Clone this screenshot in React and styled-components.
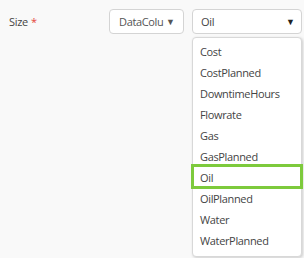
import React from "react";
import styled, { createGlobalStyle } from "styled-components";

const Global = createGlobalStyle`
  html, body { margin: 0; padding: 0; background: #f9f9f9; }
  body { font-family: "Open Sans", "Noto Sans", sans-serif; color: #444; }
`;

const Page = styled.div`
  width: 304px;
  height: 258px;
  overflow: hidden;
  position: relative;
`;

const Row = styled.div`
  display: flex;
  align-items: center;
  padding: 9px 0 0 9px;
`;

const Label = styled.div`
  width: 100px;
  font-size: 11px;
  letter-spacing: -0.3px;
  line-height: 25px;
  color: #444;
`;

const Required = styled.span`
  color: #e5463b;
  margin-left: 3px;
`;

const SelectBox = styled.div`
  box-sizing: border-box;
  width: ${(p) => p.$w}px;
  height: 25px;
  margin-right: ${(p) => p.$mr || 0}px;
  background: #fff;
  border: 1px solid #d4d4d4;
  border-radius: 4px;
  display: flex;
  align-items: center;
  justify-content: space-between;
  padding: 0 ${(p) => p.$pr}px 0 ${(p) => p.$pl}px;
  font-size: 11px;
  letter-spacing: -0.35px;
  color: ${(p) => p.$color || "#444"};
  position: relative;
`;

const Value = styled.span`
  white-space: nowrap;
`;

const Arrow = styled.span`
  font-size: 9px;
  line-height: 1;
  letter-spacing: 0;
  color: ${(p) => p.$color || "#222"};
`;

const Menu = styled.ul`
  position: absolute;
  top: 27px;
  left: -1px;
  right: -1px;
  margin: 0;
  padding: 3px 0 5px;
  list-style: none;
  background: #fff;
  border: 1px solid #d8d8d8;
  border-radius: 4px;
  box-shadow: 1px 1px 3px rgba(0, 0, 0, 0.18);
  z-index: 2;
`;

const Item = styled.li`
  position: relative;
  height: 21px;
  line-height: 21px;
  padding-left: 7px;
  font-size: 11px;
  letter-spacing: -0.35px;
  color: #444;
  ${(p) =>
    p.$active &&
    `
    &::after {
      content: "";
      position: absolute;
      top: -3px;
      bottom: -1px;
      left: -2px;
      right: -2px;
      border: 3px solid #7dca3c;
    }
  `}
`;

const options = [
  "Cost",
  "CostPlanned",
  "DowntimeHours",
  "Flowrate",
  "Gas",
  "GasPlanned",
  "Oil",
  "OilPlanned",
  "Water",
  "WaterPlanned",
];

export default function App() {
  return (
    <Page>
      <Global />
      <Row>
        <Label>
          Size<Required>*</Required>
        </Label>
        <SelectBox $w={75} $mr={8} $pl={9} $pr={8} $color="#555">
          <Value>DataColu</Value>
          <Arrow $color="#555">▼</Arrow>
        </SelectBox>
        <SelectBox $w={110} $pl={8} $pr={6}>
          <Value>Oil</Value>
          <Arrow>▼</Arrow>
          <Menu>
            {options.map((o) => (
              <Item key={o} $active={o === "Oil"}>
                {o}
              </Item>
            ))}
          </Menu>
        </SelectBox>
      </Row>
    </Page>
  );
}
